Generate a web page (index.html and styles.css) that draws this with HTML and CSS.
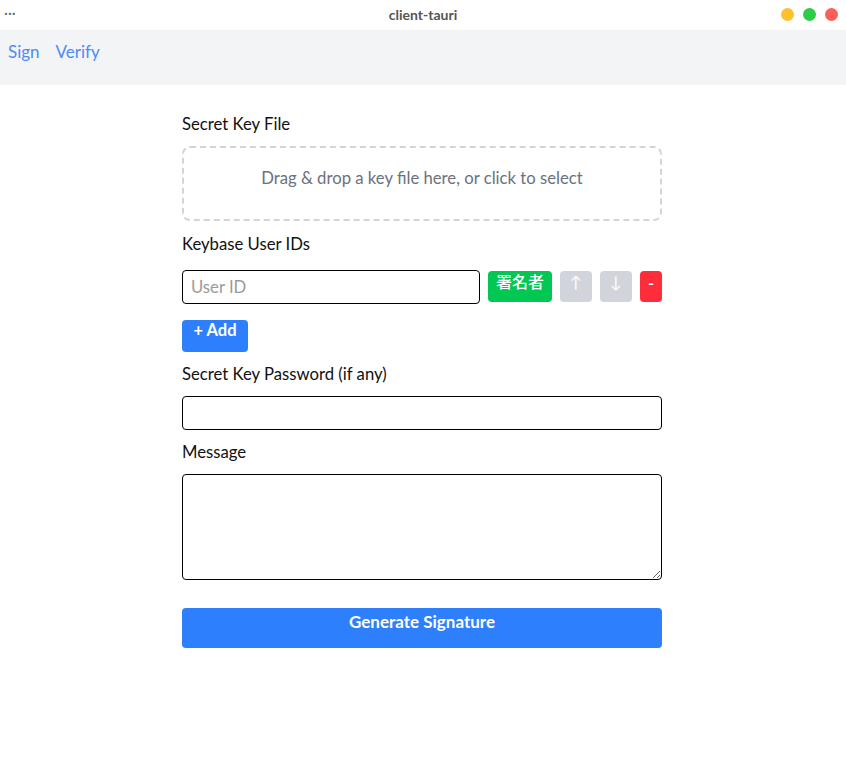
FILE: index.html
```html
<!DOCTYPE html>
<html>
<head>
<meta charset="utf-8">
<link rel="stylesheet" href="styles.css">
</head>
<body>
<div class="titlebar">
  <span class="dots">···</span>
  <span class="title">client-tauri</span>
  <div class="lights">
    <span class="light yellow"></span>
    <span class="light green"></span>
    <span class="light red"></span>
  </div>
</div>
<nav class="nav">
  <a class="nav-link">Sign</a>
  <a class="nav-link">Verify</a>
</nav>
<main class="form">
  <label class="label">Secret Key File</label>
  <div class="dropzone">Drag &amp; drop a key file here, or click to select</div>
  <label class="label">Keybase User IDs</label>
  <div class="row">
    <input class="input user-input" placeholder="User ID">
    <button class="btn btn-green">署名者</button>
    <button class="btn btn-gray">↑</button>
    <button class="btn btn-gray">↓</button>
    <button class="btn btn-red">-</button>
  </div>
  <button class="btn btn-blue add">+ Add</button>
  <label class="label">Secret Key Password (if any)</label>
  <input class="input full" type="password">
  <label class="label">Message</label>
  <textarea class="textarea"></textarea>
  <button class="btn btn-blue submit">Generate Signature</button>
</main>
</body>
</html>
```
FILE: styles.css
```css
* { box-sizing: border-box; }
body {
  margin: 0;
  font-family: Lato, "Noto Sans CJK JP", sans-serif;
  background: #fff;
  color: #111;
}
.titlebar {
  height: 30px;
  display: flex;
  align-items: flex-start;
  justify-content: space-between;
  padding: 4px 8px 0 4px;
  position: relative;
}
.dots { font-size: 15px; line-height: 16px; color: #666; }
.lights { margin-top: 4px; }
.title {
  position: absolute;
  left: 0; right: 0;
  top: 6px;
  text-align: center;
  font-size: 14px;
  font-weight: 700;
  color: #555;
}
.lights { display: flex; gap: 9px; }
.light { width: 13px; height: 13px; border-radius: 50%; display: block; }
.yellow { background: #fcc22e; }
.green { background: #2ccb48; }
.red { background: #fd5f57; }
.nav {
  background: #f3f4f6;
  height: 55px;
  padding: 10px 8px;
  display: flex;
  gap: 16px;
  align-items: flex-start;
}
.nav-link { color: #4d8bf8; font-size: 17px; line-height: 24px; cursor: pointer; }
.form {
  width: 480px;
  margin: 0 auto;
  margin-left: calc(50% - 241px);
  padding-top: 27px;
  display: flex;
  flex-direction: column;
  align-items: flex-start;
}
.label {
  font-size: 16.7px;
  line-height: 24px;
  color: #111;
  margin-bottom: 10px;
}
.dropzone {
  width: 100%;
  height: 75px;
  border: 2px dashed #d1d5db;
  border-radius: 8px;
  display: flex;
  align-items: flex-start;
  justify-content: center;
  padding-top: 18px;
  line-height: 24px;
  color: #6b7280;
  font-size: 16.7px;
  margin-bottom: 11px;
}
.row {
  width: 100%;
  display: flex;
  gap: 8px;
  margin-top: 4px;
  margin-bottom: 16px;
  align-items: flex-start;
}
.input {
  height: 34px;
  border: 1px solid #000;
  border-radius: 4px;
  font-family: inherit;
  font-size: 16.7px;
  padding: 0 8px;
}
.input::placeholder { color: #9a9a9a; }
.user-input { width: 298px; }
.full { width: 100%; margin-bottom: 10px; }
.btn {
  border: none;
  border-radius: 4px;
  color: #fff;
  font-family: inherit;
  font-size: 16px;
  font-weight: 700;
  line-height: 20px;
  padding: 0;
  display: flex;
  justify-content: center;
  align-items: flex-start;
}
.btn-green { background: #00c853; width: 64px; height: 31px; margin-top: 1px; padding-top: 1px; font-weight: 500; }
.btn-gray { background: #d1d5db; width: 32px; height: 31px; margin-top: 1px; padding-top: 1px; font-weight: 400; }
.btn-red { background: #ff2d3a; width: 22px; height: 31px; margin-top: 1px; padding-top: 2px; }
.btn-blue { background: #2d7ffb; }
.add { width: 66px; height: 32px; padding-top: 0; margin-bottom: 10px; font-size: 16.5px; }
.textarea {
  width: 100%;
  height: 106px;
  border: 1px solid #000;
  border-radius: 4px;
  margin-bottom: 28px;
  font-family: inherit;
}
.submit {
  width: 100%;
  height: 40px;
  padding-top: 4px;
  font-size: 17px;
}
```
